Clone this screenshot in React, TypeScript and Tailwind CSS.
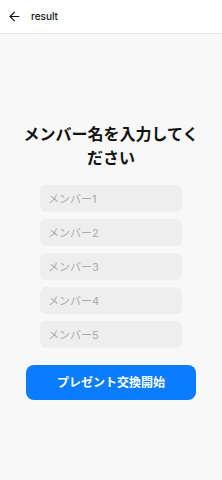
import React from 'react';
import { ArrowLeft } from 'lucide-react';

const App: React.FC = () => {
  const members = [1, 2, 3, 4, 5];

  return (
    <div className="flex flex-col h-[480px] w-[222px] bg-[#f8f8f8] font-['Inter','Noto_Sans_CJK_JP',sans-serif]">
      {/* Header */}
      <header className="h-[34px] shrink-0 bg-white border-b border-[#e8e8e8] flex items-center pl-[7px] gap-[9px]">
        <ArrowLeft size={15} strokeWidth={1.8} className="text-[#111]" />
        <span className="text-[10px] font-medium text-[#111]">result</span>
      </header>

      {/* Content */}
      <div className="flex-1 flex flex-col items-center pt-[88px]">
        <h1 className="text-[16px] leading-[24px] font-bold text-[#111] text-center px-[18px]">
          メンバー名を入力してください
        </h1>

        <div className="mt-[15px] flex flex-col gap-[7px] w-[142px]">
          {members.map((n) => (
            <input
              key={n}
              type="text"
              placeholder={`メンバー${n}`}
              className="h-[27px] w-full rounded-[6px] bg-[#eeeeee] px-[8px] text-[11px] text-[#333] placeholder:text-[#aaaaaa] outline-none"
            />
          ))}
        </div>

        <button className="mt-[17px] h-[35px] w-[170px] rounded-[8px] bg-[#0a7cff] text-white text-[12px] font-bold">
          プレゼント交換開始
        </button>
      </div>
    </div>
  );
};

export default App;
